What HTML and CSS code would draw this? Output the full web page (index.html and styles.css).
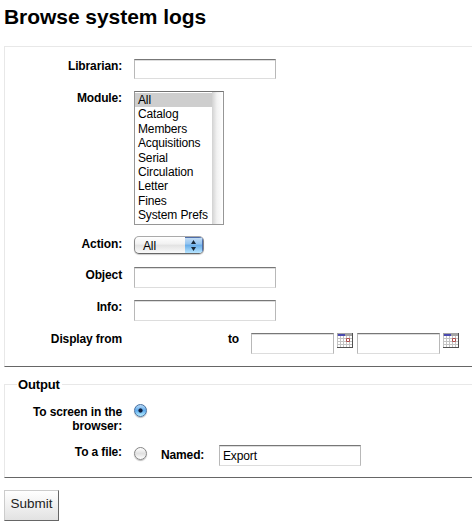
FILE: index.html
```html
<!DOCTYPE html>
<html lang="en">
<head>
<meta charset="utf-8">
<title>Browse system logs</title>
<link rel="stylesheet" href="styles.css">
</head>
<body>
<svg class="defs" width="0" height="0" aria-hidden="true">
  <symbol id="calendar" viewBox="0 0 16 15">
    <path fill="#c4c4c4" d="M0 0h16v15H0z"/>
    <path fill="#fff" d="M1 3h2v2H1zM4 3h2v2H4zM7 3h2v2H7zM10 3h2v2h-2zM13 3h2v2h-2zM1 6h2v2H1zM4 6h2v2H4zM7 6h2v2H7zM13 6h2v2h-2zM1 9h2v2H1zM4 9h2v2H4zM7 9h2v2H7zM10 9h2v2h-2zM13 9h2v2h-2zM1 12h2v2H1zM4 12h2v2H4zM7 12h2v2H7zM10 12h2v2h-2zM13 12h2v2h-2z"/>
    <path fill="#a4a4a4" d="M0 0h15v3H0z"/>
    <path fill="#4a4ab0" d="M1 1h7v2H1z"/>
    <path fill="#fff" stroke="#ae4d4d" d="M9.5 5.5h3v3h-3z"/>
    <path fill="#505050" d="M15 0h1v15H0v-1h15z"/>
  </symbol>
</svg>
<h1>Browse system logs</h1>
<form>
  <section class="panel filters">
    <div class="row librarian"><label>Librarian:</label><input class="text" type="text"></div>
    <div class="row module"><label>Module:</label>
      <div class="listbox">
        <ul><li class="selected">All</li><li>Catalog</li><li>Members</li><li>Acquisitions</li><li>Serial</li><li>Circulation</li><li>Letter</li><li>Fines</li><li>System Prefs</li></ul>
        <div class="track"></div>
      </div>
    </div>
    <div class="row action"><label>Action:</label>
      <div class="popup"><span>All</span><i><svg width="18" height="17" viewBox="0 0 18 17"><path d="M6 7l2.5-4L11 7zM6 10h5l-2.5 4z" fill="#182838"/></svg></i></div>
    </div>
    <div class="row object"><label>Object</label><input class="text" type="text"></div>
    <div class="row info"><label>Info:</label><input class="text" type="text"></div>
    <div class="row dates"><label>Display from</label><span class="to">to</span>
      <input class="text date" type="text"><svg class="cal" width="16" height="15"><use href="#calendar"/></svg>
      <input class="text date" type="text"><svg class="cal" width="16" height="15"><use href="#calendar"/></svg>
    </div>
  </section>
  <section class="panel output">
    <h2>Output</h2>
    <div class="row screen"><label>To screen in the browser:</label><span class="radio on"></span></div>
    <div class="row file"><label>To a file:</label><span class="radio"></span><span class="named">Named:</span><input class="text" type="text" value="Export"></div>
  </section>
  <button class="submit" type="button">Submit</button>
</form>
</body>
</html>
```
FILE: styles.css
```css
* { box-sizing: border-box; }
html { overflow: hidden; }
body {
  margin: 0 0 0 4px;
  background: #fff;
  color: #000;
  font: 12px/14px "Liberation Sans", Arial, sans-serif;
  letter-spacing: -0.13px;
}
.defs { position: absolute; }
h1 {
  margin: 0;
  padding-top: 5px;
  height: 46px;
  font-size: 21px;
  letter-spacing: -0.05px;
  line-height: 24px;
  white-space: nowrap;
}
.panel {
  border: 1px solid #e8e8e8;
  border-right: 0;
  border-bottom-color: #666;
}
.filters { height: 321px; padding-top: 12px; }
.row { display: flex; align-items: flex-start; }
.row label { width: 117px; margin-right: 12px; text-align: right; font-weight: bold; flex: none; }
.librarian { height: 32px; }
.module { height: 145px; }
.action { height: 31px; }
.action label, .object label { padding-top: 1px; }
.object { height: 33px; }
.info { height: 33px; }
.text {
  width: 142px;
  height: 21px;
  margin: 0;
  padding: 0 3px;
  border: 1px solid #b8b8b8;
  border-top-color: #777;
  border-bottom-color: #ddd;
  border-radius: 0;
  background: #fff;
  box-shadow: inset 0 1px #ddd;
  font: 12px "Liberation Sans", Arial, sans-serif;
  letter-spacing: -0.13px;
}
.librarian .text { height: 20px; }
.listbox {
  display: flex;
  width: 90px;
  height: 134px;
  border: 1px solid #969696;
  border-top-color: #737373;
  padding-top: 1px;
}
.listbox ul { width: 77px; margin: 0; padding: 0; list-style: none; }
.listbox li { height: 14.4px; padding-left: 3px; line-height: 15px; white-space: nowrap; }
.listbox .selected { background: #cecece; }
.track { width: 11px; margin-top: -1px; background: linear-gradient(90deg, #d2d2d2, #f2f2f2 45%, #fff); }
.popup {
  display: flex;
  width: 70px;
  height: 18px;
  border: 1px solid #888;
  border-top-color: #aaa;
  border-bottom-color: #666;
  border-radius: 5px;
  overflow: hidden;
  background: linear-gradient(#fff, #f1f1f1 45%, #e2e2e2 50%, #fafafa);
  box-shadow: 0 1px 1px #ccc;
}
.popup span { width: 51px; padding-left: 8px; line-height: 19px; }
.popup i { width: 18px; background: linear-gradient(#c9e0f6, #92c3ef 45%, #65abe8 50%, #b7e5ff); box-shadow: inset -1px 1px #506eaa; }
.popup svg { display: block; }
.dates label, .to { margin-top: -1px; }
.to { width: 105px; text-align: right; font-weight: bold; margin-right: 12px; }
.date { width: 83px; margin-right: 3px; }
.cal { margin-right: 4px; flex: none; }
.output { height: 94px; margin-top: 17px; }
.output h2 {
  width: 45px;
  height: 14px;
  margin: -7px 0 0 12px;
  padding-left: 1px;
  background: #fff;
  font-size: 13px;
  line-height: 14px;
}
.screen { height: 41px; margin-top: 12px; }
.screen label { margin-top: 1px; }
.radio {
  width: 13px;
  height: 13px;
  margin-top: 1px;
  border: 1px solid #858585;
  border-radius: 50%;
  background: linear-gradient(#fff, #e0e0e0 50%, #fff);
  box-shadow: 0 1px 1px #bbb;
}
.radio.on {
  margin-top: 0;
  border-color: #4770a0;
  background: radial-gradient(circle, #102040 0 1.7px, transparent 2.5px), linear-gradient(#b9daf7, #5eabed 50%, #b9efff);
}
.file .radio { margin-top: 2px; }
.named { width: 72px; padding: 3px 0 0 14px; font-weight: bold; }
.submit {
  display: block;
  width: 55px;
  height: 31px;
  margin: 12px 0 0;
  padding: 0 0 4px;
  border: 1px solid #ccc;
  border-right-color: #666;
  border-bottom-color: #666;
  border-radius: 0;
  background: linear-gradient(#fff, #e2e2e2);
  color: #222;
  font: 13.5px "Liberation Sans", Arial, sans-serif;
}
```
